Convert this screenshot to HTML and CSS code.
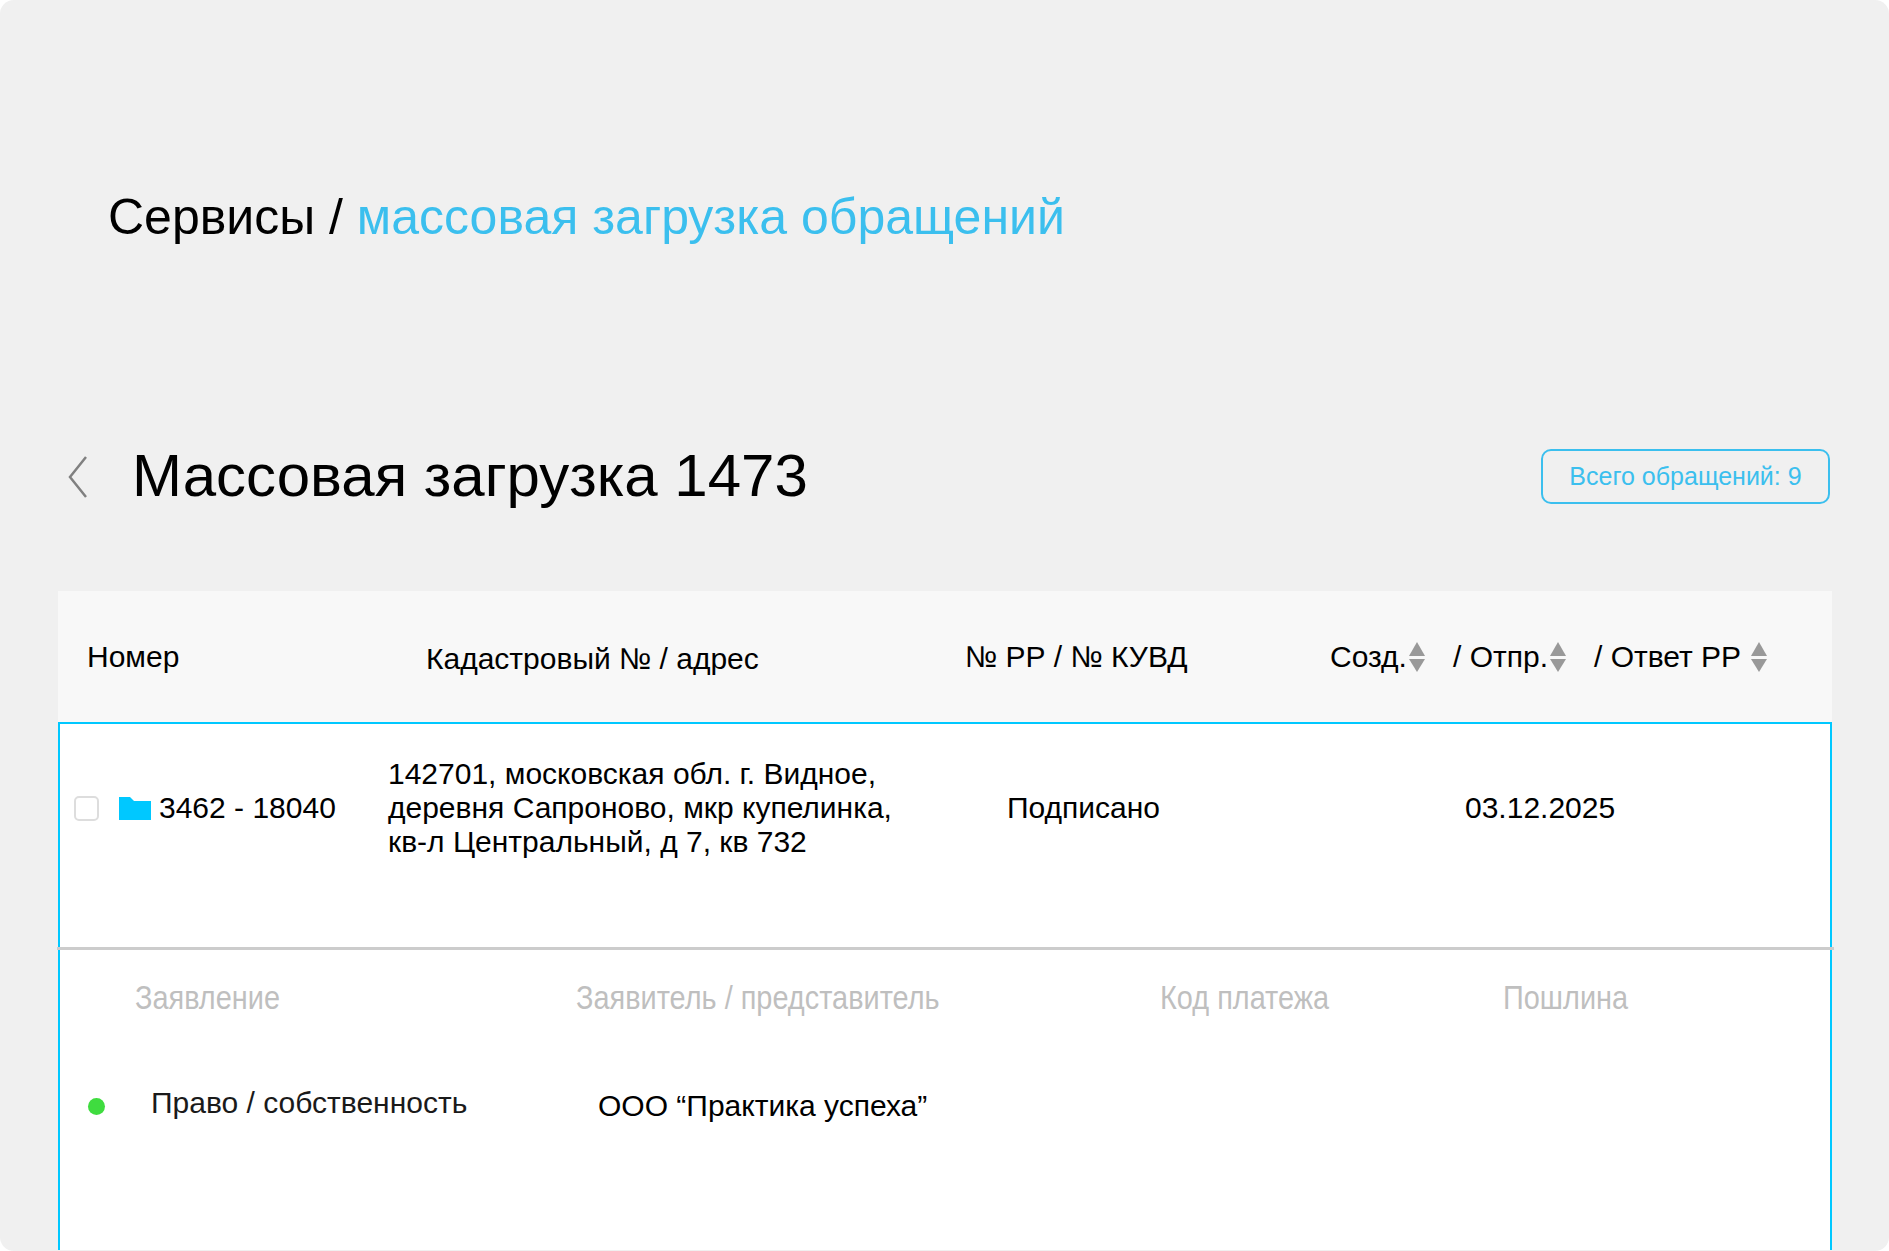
FILE: index.html
```html
<!DOCTYPE html>
<html lang="ru">
<head>
<meta charset="utf-8">
<title>Массовая загрузка 1473</title>
<link rel="stylesheet" href="styles.css">
</head>
<body>
<main class="page">
  <div class="crumbs">Сервисы / <span class="crumbs-current">массовая загрузка обращений</span></div>
  <div class="title-row">
    <svg class="back" width="20" height="42" viewBox="0 0 20 42"><path d="M18 1 L2 21 L18 41" fill="none" stroke="#808080" stroke-width="2.5"/></svg>
    <h1 class="title">Массовая загрузка 1473</h1>
    <div class="badge">Всего обращений: 9</div>
  </div>
  <section class="table">
    <div class="thead">
      <div>Номер</div>
      <div class="th-low">Кадастровый № / адрес</div>
      <div>№ РР / № КУВД</div>
      <div class="sort">Созд.<span class="arrows"><i class="up"></i><i class="down"></i></span></div>
      <div class="sort">/ Отпр.<span class="arrows"><i class="up"></i><i class="down"></i></span></div>
      <div class="sort">/ Ответ РР <span class="arrows wide"><i class="up"></i><i class="down"></i></span></div>
    </div>
    <div class="panel">
      <div class="row">
        <span class="check"></span>
        <svg class="folder" width="32" height="23" viewBox="0 0 32 23"><path d="M0 0H11L15 4H32V23H0Z" fill="#00c8ff"/></svg>
        <div>3462 - 18040</div>
        <div class="address">142701, московская обл. г. Видное,<br>деревня Сапроново, мкр купелинка,<br>кв-л Центральный, д 7, кв 732</div>
        <div>Подписано</div>
        <div>03.12.2025</div>
      </div>
      <div class="divider"></div>
      <div class="subhead">
        <div class="narrow">Заявление</div>
        <div class="narrow">Заявитель / представитель</div>
        <div class="narrow">Код платежа</div>
        <div class="narrow">Пошлина</div>
      </div>
      <div class="item">
        <span class="dot"></span>
        <div class="item-name">Право / собственность</div>
        <div>ООО “Практика успеха”</div>
      </div>
    </div>
  </section>
</main>
</body>
</html>
```
FILE: styles.css
```css
* { box-sizing: border-box; }
html, body { margin: 0; height: 100%; background: #fff; }
body { font-family: "Liberation Sans", Arial, sans-serif; color: #000; overflow: hidden; }
.page {
  height: 1251px;
  background: #f0f0f0;
  border-radius: 14px;
  overflow: hidden;
  padding-top: 188px;
}
.crumbs { padding-left: 108px; font-size: 50px; line-height: 58px; height: 58px; color: #000; }
.crumbs-current { color: #3bbfee; }
.title-row {
  margin-top: 197px;
  height: 66px;
  display: flex;
  align-items: center;
  padding: 0 59px 0 68px;
}
.back { flex: none; margin-top: 2px; }
.title { margin: 0 0 0 44px; font-size: 60px; line-height: 66px; font-weight: 400; flex: 1; }
.badge {
  width: 289px;
  height: 55px;
  border: 2px solid #3bbfee;
  border-radius: 10px;
  color: #3bbfee;
  font-size: 25px;
  display: flex;
  align-items: center;
  justify-content: center;
}
.table { margin: 82px 57px 0 58px; }
.thead {
  height: 131px;
  background: #f8f8f8;
  display: grid;
  grid-template-columns: 339px 539px 365px 123px 141px 1fr;
  align-items: center;
  padding-left: 29px;
  font-size: 30px;
}
.th-low { padding-top: 5px; }
.sort { display: flex; align-items: center; }
.arrows { display: flex; flex-direction: column; gap: 3px; margin-left: 2px; }
.arrows.wide { margin-left: 10px; }
.up, .down { display: block; width: 0; height: 0; border-left: 8px solid transparent; border-right: 8px solid transparent; }
.up { border-bottom: 14px solid #999; }
.down { border-top: 13px solid #999; }
.panel {
  height: 528px;
  border: solid #00c8ff;
  border-width: 2px 2px 0;
  background: #fff;
}
.row {
  height: 223px;
  display: grid;
  grid-template-columns: 45px 40px 229px 619px 458px 1fr;
  align-items: center;
  padding: 0 0 56px 14px;
  font-size: 30px;
}
.check { width: 25px; height: 25px; border: 2px solid #ddd; border-radius: 5px; margin-top: 2px; }
.folder { margin-top: 2px; }
.address { line-height: 34px; }
.divider { height: 3px; background: #ccc; margin: 0 -4px 0 -3px; }
.subhead {
  display: grid;
  grid-template-columns: 441px 584px 343px 1fr;
  padding: 27px 0 0 75px;
  font-size: 34px;
  line-height: 40px;
  color: #bfbfbf;
}
.narrow { transform: scaleX(.85); transform-origin: left center; white-space: nowrap; }
.item {
  display: grid;
  grid-template-columns: 63px 447px 1fr;
  align-items: center;
  margin-top: 66px;
  padding-left: 28px;
  font-size: 30px;
  line-height: 40px;
}
.dot { width: 17px; height: 17px; border-radius: 50%; background: #3fdc3f; }
.item-name { padding-bottom: 6px; color: #1a1a1a; }
```
